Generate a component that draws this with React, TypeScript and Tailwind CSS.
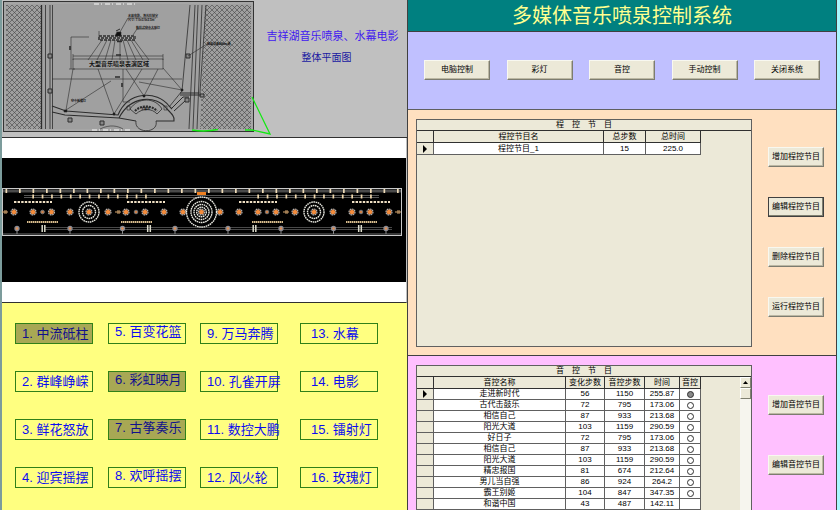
import React, { useState } from 'react';
import clsx from 'clsx';

const programs = [
    { id: 1, name: '中流砥柱' }, { id: 5, name: '百变花篮' }, { id: 9, name: '万马奔腾' }, { id: 13, name: '水幕' },
    { id: 2, name: '群峰峥嵘' }, { id: 6, name: '彩虹映月' }, { id: 10, name: '孔雀开屏' }, { id: 14, name: '电影' },
    { id: 3, name: '鲜花怒放' }, { id: 7, name: '古筝奏乐' }, { id: 11, name: '数控大鹏' }, { id: 15, name: '镭射灯' },
    { id: 4, name: '迎宾摇摆' }, { id: 8, name: '欢呼摇摆' }, { id: 12, name: '风火轮' }, { id: 16, name: '玫瑰灯' },
];

const songs = [
    { name: '走进新时代', changes: '56', steps: '1150', time: '255.87' },
    { name: '古代击鼓乐', changes: '72', steps: '795', time: '173.06' },
    { name: '相信自己', changes: '87', steps: '933', time: '213.68' },
    { name: '阳光大道', changes: '103', steps: '1159', time: '290.59' },
    { name: '好日子', changes: '72', steps: '795', time: '173.06' },
    { name: '相信自己', changes: '87', steps: '933', time: '213.68' },
    { name: '阳光大道', changes: '103', steps: '1159', time: '290.59' },
    { name: '精忠报国', changes: '81', steps: '674', time: '212.64' },
    { name: '男儿当自强', changes: '86', steps: '924', time: '264.2' },
    { name: '霸王别姬', changes: '104', steps: '847', time: '347.35' },
    { name: '和谐中国', changes: '43', steps: '487', time: '142.11' },
];

const range = (n: number) => Array.from({ length: n }, (_, i) => i);

const PushButton = ({ label, wide, focused }: { label: string; wide?: boolean; focused?: boolean }) => (
    <button
        type="button"
        className={clsx(
            'h-5 shrink-0 whitespace-nowrap bg-[#ece9d8] text-[8px] leading-none text-black border',
            wide ? 'w-[66px]' : 'w-14',
            focused
                ? 'border-[#404040] shadow-[inset_-1px_-1px_0_#808070]'
                : 'border-t-[#f8f8f0] border-l-[#f8f8f0] border-b-[#7c7c70] border-r-[#7c7c70] shadow-[inset_-1px_-1px_0_#bcb8a4]'
        )}
    >
        {label}
    </button>
);

const RowArrow = () => (
    <svg viewBox="0 0 4 8" className="mx-auto h-2 w-1" aria-hidden="true">
        <path d="M0 0 L4 4 L0 8 Z" fill="#000" />
    </svg>
);

const SitePlan = () => (
    <svg viewBox="0 0 256 137" className="h-[137px] w-64 shrink-0 overflow-visible" fill="none" stroke="#2c2c2c" strokeWidth="0.6">
        <defs>
            <pattern id="hatch" width="5" height="5" patternUnits="userSpaceOnUse">
                <path d="M0 0 L5 5 M5 0 L0 5" stroke="#444" strokeWidth="0.6" />
            </pattern>
        </defs>
        <rect x="1.5" y="1.5" width="250" height="130" fill="#a0a0a0" stroke="#333" strokeWidth="1" />
        <rect x="3" y="3" width="247" height="127" stroke="#b4b4b4" />
        <path d="M4 5 H39 V129 H4 Z M203 5 H249 V129 H198 Z" fill="url(#hatch)" stroke="none" />
        <path d="M92 4 H136 M90 130 H130" stroke="#ddd" strokeWidth="1.5" strokeDasharray="5 2 1 3" />
        {/* banks on both sides of the lake */}
        <path d="M39.5 5 V129" strokeWidth="1.3" />
        <path d="M43.5 5 V129 M48 5 V129 M50.5 5 V129" strokeWidth="0.8" />
        <path d="M188 5 L180 91 L167 107 M193 5 L187 129 M196 5 L191 129 M200 5 L195 129 M204 5 L198 92" strokeWidth="0.8" />
        <path d="M46 54 h4 v4 h-4 z M46 89 h4 v4 h-4 z M184 54 h4 v4 h-4 z M183 98 h4 v4 h-4 z M66 118 h4 v4 h-4 z M98 121 h4 v4 h-4 z M198 94 h4 v3 h-4 z" fill="#888" strokeWidth="1" />
        <path d="M178 93 H199 M178 95 H199 M170 108 L181 97 H187 M172 111 L183 101" strokeWidth="1" />
        {/* screen barge and its projection lines */}
        <path d="M97 36 H133 V40 H97 Z M99 38 H132" strokeWidth="1.3" strokeDasharray="3 1" />
        <path d="M113 36 L115 32 H119 V36 Z" fill="#111" />
        <path d="M114 31 L118 29" strokeWidth="1" />
        <path d="M100 40 L86 60 M105 40 L95 60 M109 40 L103 60 M113 40 L110 60 M118 40 L118 60 M121 40 L126 60 M125 40 L134 60 M129 40 L141 60 M132 40 L147 60" />
        <path d="M97 31 V40 M69 37 H87 M69 37 V69 M67 69 H73 M71 56 H161 M71 54 V60 M161 54 V60" />
        <path d="M118 32 L126 18 H154 M131 35 L135 29 H154 M186 56 L205 44 H227" />
        <rect x="71" y="59" width="90" height="10" />
        <path d="M71 69 L64 110 M96 69 L112 114 M121 69 V102 H128 M140 69 L112 114 M124 69 L142 96 M156 69 L142 96 M161 68 L180 90 M50 79 H180 M109 81 L64 110 M137 82 L180 90" />
        {/* shore with the viewing stand */}
        <path d="M50 106 L64 111 L116 115 C126 91 155 90 167 106 L170 109 M50 112 L63 115 L117 118 C128 96 154 94 165 109 C170 114 173 117 172 121 H154 M117 118 L134 121" strokeWidth="1.1" />
        <path d="M154 121 C157 134 132 134 134 121" strokeWidth="0.8" />
        <path d="M128 109 C136 97 153 97 160 109 L155 114 C150 108 140 108 134 114 Z" strokeWidth="0.8" />
        <path d="M133 111 C139 105 149 105 155 111" strokeWidth="2.2" strokeDasharray="2 1" />
        <path d="M125 106 h3 v4 h-3 z M162 106 h3 v4 h-3 z M98 129 C108 124 116 126 121 129" />
        <path d="M62 110 h3 v2 h-3 z M111 113 h2 v2 h-2 z M141 95 h2 v2 h-2 z M179 89 h2 v2 h-2 z" fill="#111" />
        <path d="M114 55 H119 M113 77 H118 M68 46 V50 M120 83 V87 M115 41.5 H120" strokeWidth="1.6" />
        <g fill="#111" stroke="none" fontSize="3" fontWeight="700">
            <text x="126" y="17">水幕电影、激光控制室</text>
            <text x="126" y="21">尺寸: 7.0x3.0x2.5m</text>
            <text x="134" y="29">数控式空中大喷灯</text>
            <text x="205" y="45">喷泉设备400m 通</text>
            <text x="69" y="102">空中摇摆灯</text>
            <text x="139" y="110">主席台</text>
            <text x="87" y="66" fontSize="6">大型音乐喷泉表演区域</text>
        </g>
        <path d="M250 97 L268 134 L250 130 H243" stroke="#14e814" strokeWidth="1.3" />
        <path d="M190 130 Q203 132 216 129.5" stroke="#14e814" strokeWidth="1.5" />
    </svg>
);

const Star = ({ x }: { x: number }) => (
    <g>
        <circle cx={x} cy="212" r="3" fill="#5c4434" stroke="#b4b4b4" strokeWidth="1.2" strokeDasharray="1.6 0.7" />
        <path d={`M${x} 209.5 L${x + 2.4} 211.3 L${x + 1.5} 214 H${x - 1.5} L${x - 2.4} 211.3 Z`} fill="#f48c3c" />
    </g>
);

const Rings = ({ x, radii }: { x: number; radii: number[] }) => (
    <g>
        {radii.map(r => (
            <circle key={r} cx={x} cy="212" r={r} stroke="#e8e8e0" strokeWidth="1.4" strokeDasharray="1.6 0.6" />
        ))}
        <Star x={x} />
    </g>
);

const FountainLayout = () => (
    <svg viewBox="2 158 404 124" className="block h-auto w-full bg-black" fill="none">
        <rect x="2.5" y="188.5" width="399" height="47" stroke="#c8c8c8" />
        <path d="M3 191 H401" stroke="#4a4a4a" strokeWidth="3" />
        <path d="M3 234 H401" stroke="#4a4a4a" strokeWidth="1.5" />
        <path d="M24 195.5 H379 M24 197.5 H379" stroke="#6c6c6c" strokeWidth="0.8" />
        <path d="M45 227.5 H392 M45 229.5 H392" stroke="#5c5c5c" strokeWidth="0.8" />
        {range(30).map(i => (
            <rect key={i} x={5.5 + i * 13.5} y="189" width="1.7" height="4" fill="#f0dcb8" />
        ))}
        {[33, 258].map(start => range(13).map(i => (
            <rect key={start + i} x={start + i * 9.4 - 0.7} y="194.5" width="1.7" height="4" fill="#f0d8ac" />
        )))}
        {[14, 127, 239, 352].map(x => (
            <path key={x} d={`M${x} 202 h38`} stroke="#f0e0c4" strokeWidth="2" strokeDasharray="2.4 1.2" />
        ))}
        {[27, 121, 252, 346].map(x => (
            <path key={x} d={`M${x} 222 h31`} stroke="#d8bc8c" strokeWidth="2" strokeDasharray="1.5 0.5" />
        ))}
        {[14, 33, 51.5, 70, 108, 126, 145, 164, 183, 220, 239, 258, 276, 295, 333, 352, 370, 389].map(x => <Star key={x} x={x} />)}
        {[42.5, 136, 267, 361].map(x => (
            <circle key={x} cx={x} cy="212" r="1.8" fill="#d08048" stroke="#777" />
        ))}
        {[2, 115, 283, 395].map(x => (
            <path key={x} d={`M${x} 212 h6 M${x + 2} 211 h3 M${x + 2} 213 h3`} stroke="#d8a870" strokeWidth="1" />
        ))}
        <Rings x={89} radii={[10, 6.5]} />
        <Rings x={201.5} radii={[15, 10.5, 7.5, 4.8]} />
        <Rings x={314} radii={[10, 6.5]} />
        {[17, 70, 122.5, 175, 228, 281, 333.5, 386].map(x => (
            <g key={x}>
                <circle cx={x} cy="228.5" r="2" fill="#e09058" stroke="#8c8c94" strokeWidth="1.3" />
                <path d={`M${x} 231 V234`} stroke="#888" />
            </g>
        ))}
        {[43.5, 149, 254.5, 360].map(x => (
            <path key={x} d={`M${x - 1.3} 225 V232 M${x + 1.3} 225 V232`} stroke="#dcdccc" strokeWidth="1.5" />
        ))}
        <rect x="197" y="192" width="9" height="3" fill="#f08020" />
    </svg>
);

const ProgramTable = () => (
    <table className="table-fixed border-separate border-spacing-0 text-center text-[8px] leading-[11px]">
        <colgroup>
            <col className="w-[17px]" />
            <col className="w-[170px]" />
            <col className="w-[42px]" />
            <col className="w-[55px]" />
        </colgroup>
        <thead>
            <tr className="*:h-3 *:border-b *:border-r *:border-[#303030] *:p-0 *:font-normal">
                <th aria-label="当前行" />
                <th>程控节目名</th>
                <th>总步数</th>
                <th>总时间</th>
            </tr>
        </thead>
        <tbody>
            <tr className="*:h-3 *:border-b *:border-r *:border-[#606060] *:p-0">
                <td><RowArrow /></td>
                <td className="bg-white">程控节目_1</td>
                <td className="bg-white">15</td>
                <td className="bg-white">225.0</td>
            </tr>
        </tbody>
    </table>
);

const MusicTable = () => {
    const [current, setCurrent] = useState(0);

    return (
        <table className="table-fixed self-start border-separate border-spacing-0 text-center text-[8px] leading-[10px]">
            <colgroup>
                <col className="w-[17px]" />
                <col className="w-[132px]" />
                <col className="w-[39px]" />
                <col className="w-10" />
                <col className="w-[35px]" />
                <col className="w-[21px]" />
            </colgroup>
            <thead>
                <tr className="*:h-3 *:whitespace-nowrap *:border-b *:border-r *:border-[#303030] *:p-0 *:font-normal">
                    <th aria-label="当前行" />
                    <th>音控名称</th>
                    <th>变化步数</th>
                    <th>音控步数</th>
                    <th>时间</th>
                    <th>音控</th>
                </tr>
            </thead>
            <tbody>
                {songs.map((song, i) => (
                    <tr key={i} className="*:h-[11px] *:border-b *:border-r *:border-[#606060] *:p-0">
                        <td>{i === 0 && <RowArrow />}</td>
                        <td className="bg-white">{song.name}</td>
                        <td className="bg-white">{song.changes}</td>
                        <td className="bg-white">{song.steps}</td>
                        <td className="bg-white">{song.time}</td>
                        <td className="bg-white">
                            {i < 10 && (
                                <input
                                    type="radio"
                                    name="song"
                                    aria-label={song.name}
                                    checked={current === i}
                                    onChange={() => setCurrent(i)}
                                    className="mx-auto block size-[7px] appearance-none rounded-full border border-[#303030] bg-white checked:bg-[#888]"
                                />
                            )}
                        </td>
                    </tr>
                ))}
            </tbody>
        </table>
    );
};

const App = () => (
    <div className="flex h-screen overflow-hidden bg-[#a8f8ff] pr-[3px] font-['Liberation_Sans','Noto_Sans_CJK_SC',sans-serif] text-black">
        <div className="flex w-[407px] min-w-0 shrink grow flex-col border-l-2 border-[#7c9c9c]">
            <section className="flex border-b border-[#303030] bg-[#c0c0c0]">
                <SitePlan />
                <div className="flex grow flex-col items-center gap-2 whitespace-nowrap pt-7">
                    <h2 className="text-[11px] leading-4 text-[#4018f0]">吉祥湖音乐喷泉、水幕电影</h2>
                    <p className="pr-3 text-[10px] leading-3 text-[#1818a0]">整体平面图</p>
                </div>
            </section>

            <section className="border-b border-r border-b-[#303030] border-r-[#c0c0c0] bg-white py-5">
                <FountainLayout />
            </section>

            <section className="grid grow grid-cols-[93px_92px_100px_77px] content-start gap-y-[27px] bg-[#ffff80] pl-[13px] pt-5">
                {programs.map(({ id, name }) => (
                    <button
                        key={id}
                        type="button"
                        className={clsx(
                            'flex h-[21px] w-[78px] items-center whitespace-nowrap border border-[#308018] text-[13px] leading-none',
                            id > 12 ? 'pl-2.5' : 'pl-1.5',
                            id > 4 && id < 9 && 'pb-1',
                            [1, 6, 7].includes(id) ? 'bg-[#a8a854] text-[#10108c]' : 'text-[#0c0cf0]'
                        )}
                    >
                        {id}. {name}
                    </button>
                ))}
            </section>
        </div>

        <div className="flex w-[430px] min-w-0 shrink grow flex-col border-x border-[#404040]">
            <header className="flex h-8 items-center justify-center border-b border-[#404040] bg-[#008080]">
                <h1 className="whitespace-nowrap text-[20px] leading-none text-[#ffff90]">多媒体音乐喷泉控制系统</h1>
            </header>

            <nav className="flex justify-between border-b border-[#606060] bg-[#c0c0ff] px-4 pb-[29px] pt-7">
                <PushButton wide label="电脑控制" />
                <PushButton wide label="彩灯" />
                <PushButton wide label="音控" />
                <PushButton wide label="手动控制" />
                <PushButton wide label="关闭系统" />
            </nav>

            <section className="flex gap-4 border-b border-[#404040] bg-[#ffe0c0] pb-2 pl-2 pr-3 pt-[9px]">
                <div className="min-h-[228px] grow border border-[#606060] bg-[#ece9d8]">
                    <h2 className="border-b border-[#303030] text-center text-[8px] leading-[10px]">程　控　节　目</h2>
                    <ProgramTable />
                </div>
                <div className="flex flex-col gap-[30px] pt-7">
                    <PushButton label="增加程控节目" />
                    <PushButton focused label="编辑程控节目" />
                    <PushButton label="删除程控节目" />
                    <PushButton label="运行程控节目" />
                </div>
            </section>

            <section className="flex grow gap-4 bg-[#ffc0ff] pl-2 pr-3 pt-[9px]">
                <div className="flex grow flex-col border border-b-0 border-[#606060] bg-[#ece9d8]">
                    <h2 className="border-b border-[#303030] text-center text-[8px] leading-[10px]">音　控　节　目</h2>
                    <div className="flex grow justify-between">
                        <MusicTable />
                        <div className="w-[11px] bg-[#f6f5ee]">
                            <button type="button" aria-label="向上滚动" className="flex h-[11px] w-full items-center justify-center border border-t-white border-l-white border-b-[#808070] border-r-[#808070] bg-[#ece9d8]">
                                <svg viewBox="0 0 5 3" className="h-[3px] w-[5px]"><path d="M0 3 L2.5 0 L5 3 Z" /></svg>
                            </button>
                            <div className="h-[11px] border border-t-white border-l-white border-b-[#808070] border-r-[#808070] bg-[#ece9d8]" />
                        </div>
                    </div>
                </div>
                <div className="flex flex-col gap-10 pt-[30px]">
                    <PushButton label="增加音控节目" />
                    <PushButton label="编辑音控节目" />
                </div>
            </section>
        </div>
    </div>
);

export default App;
